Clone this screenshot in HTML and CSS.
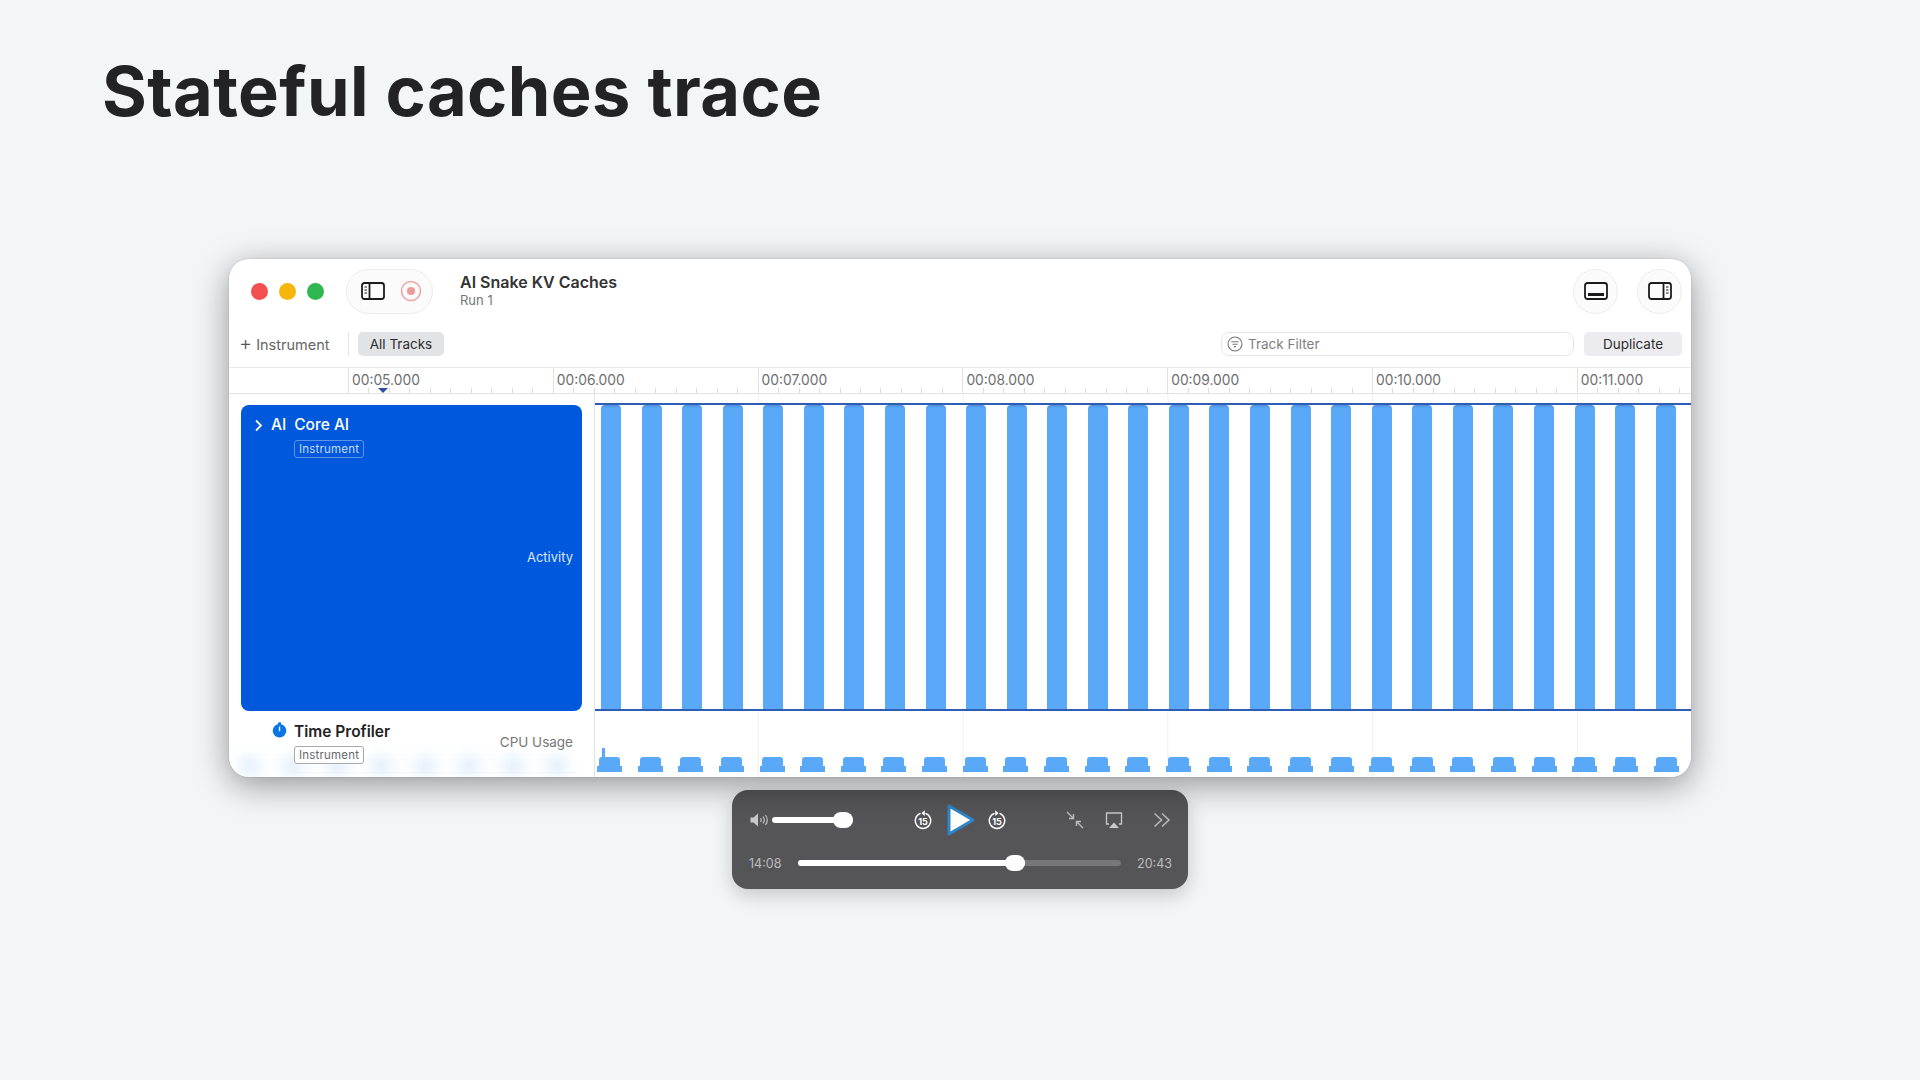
FILE: index.html
```html
<!DOCTYPE html>
<html lang="en">
<head>
<meta charset="UTF-8">
<meta name="viewport" content="width=device-width, initial-scale=1.0">
<link rel="stylesheet" href="styles.css">
<title>Stateful caches trace</title>
</head>
<body>
<h1 class="title">Stateful caches trace</h1>

<div class="window">
  <div class="titlebar">
    <div class="lights">
      <span class="light red"></span>
      <span class="light yellow"></span>
      <span class="light green"></span>
    </div>
    <div class="pill">
      <svg width="24" height="18" viewBox="0 0 24 18" fill="none" stroke="#1b1b1d" stroke-width="1.8">
        <rect x="1" y="1" width="22" height="16" rx="2.5"/>
        <path d="M8.5 1v16"/>
        <path d="M3.5 5h2.5M3.5 8h2.5M3.5 11h2.5" stroke-width="1.2"/>
      </svg>
      <svg width="22" height="22" viewBox="0 0 22 22" fill="none">
        <circle cx="11" cy="11" r="9.5" stroke="#eaa8a8" stroke-width="1.6"/>
        <circle cx="11" cy="11" r="4" fill="#ee9a9a"/>
      </svg>
    </div>
    <div class="doc">
      <div class="doc-name">AI Snake KV Caches</div>
      <div class="doc-run">Run 1</div>
    </div>
    <div class="round-btn first">
      <svg width="24" height="18" viewBox="0 0 24 18" fill="none" stroke="#1b1b1d" stroke-width="1.8">
        <rect x="1" y="1" width="22" height="16" rx="2.5"/>
        <path d="M4 12.5h16" stroke-width="3"/>
      </svg>
    </div>
    <div class="round-btn">
      <svg width="24" height="18" viewBox="0 0 24 18" fill="none" stroke="#1b1b1d" stroke-width="1.8">
        <rect x="1" y="1" width="22" height="16" rx="2.5"/>
        <path d="M15.5 1v16"/>
        <path d="M18 5h2.5M18 8h2.5M18 11h2.5" stroke-width="1.2"/>
      </svg>
    </div>
  </div>

  <div class="toolbar">
    <div class="add"><span class="plus">+</span> Instrument</div>
    <div class="tb-sep"></div>
    <div class="all-tracks">All Tracks</div>
    <div class="filter">
      <svg width="16" height="16" viewBox="0 0 16 16" fill="none" stroke="#777" stroke-width="1.1">
        <circle cx="8" cy="8" r="7"/>
        <path d="M4.2 5.8h7.6M5.5 8.2h5M7 10.6h2"/>
      </svg>
      <span>Track Filter</span>
    </div>
    <div class="duplicate">Duplicate</div>
  </div>

  <div class="ruler">
    <div class="sec">00:05.000</div>
    <div class="sec">00:06.000</div>
    <div class="sec">00:07.000</div>
    <div class="sec">00:08.000</div>
    <div class="sec">00:09.000</div>
    <div class="sec">00:10.000</div>
    <div class="sec">00:11.000</div>
    <span class="playhead"></span>
  </div>

  <div class="body">
    <div class="side">
      <div class="selected">
        <div class="track-head">
          <svg class="chev" width="9" height="13" viewBox="0 0 9 13" fill="none" stroke="#fff" stroke-width="1.8"><path d="M2 1.5l5 5-5 5"/></svg>
          <span class="ai">AI</span>
          <span>Core AI</span>
        </div>
        <span class="badge on-blue">Instrument</span>
        <div class="activity">Activity</div>
      </div>
      <div class="profiler">
        <div class="smudge"></div>
        <div class="prof-main">
          <div class="track-head dark">
            <svg class="stopwatch" width="15" height="16" viewBox="0 0 15 16"><circle cx="7.5" cy="8.7" r="6.8" fill="#0a76e6"/><rect x="6" y="0.4" width="3" height="2" fill="#0a76e6"/><rect x="6.9" y="4.6" width="1.3" height="4.6" fill="#fff"/></svg>
            <span>Time Profiler</span>
          </div>
          <span class="badge">Instrument</span>
        </div>
        <div class="cpu">CPU Usage</div>
      </div>
    </div>

    <div class="tracks">
      <div class="activity-track">
        <i></i><i></i><i></i><i></i><i></i><i></i><i></i><i></i><i></i>
        <i></i><i></i><i></i><i></i><i></i><i></i><i></i><i></i><i></i>
        <i></i><i></i><i></i><i></i><i></i><i></i><i></i><i></i><i></i>
      </div>
      <div class="cpu-track">
        <i class="spike"></i><i></i><i></i><i></i><i></i><i></i><i></i><i></i><i></i>
        <i></i><i></i><i></i><i></i><i></i><i></i><i></i><i></i><i></i>
        <i></i><i></i><i></i><i></i><i></i><i></i><i></i><i></i><i></i>
      </div>
    </div>
  </div>
</div>

<div class="player">
  <div class="player-top">
    <svg class="vol" width="19" height="14" viewBox="0 0 19 14" fill="none">
      <path d="M0.5 4.500h3l4.500-4v13l-4.500-4h-3z" fill="#c9c9c9"/>
      <path d="M10.500 5c.9 1.200.9 2.800 0 4M13 3.500c1.600 2.100 1.600 4.900 0 7M15.500 2c2.200 3 2.200 7 0 10" stroke="#c9c9c9" stroke-width="1.100"/>
    </svg>
    <div class="vol-slider"><span class="knob"></span></div>
    <div class="transport">
      <svg width="18" height="20" viewBox="0 0 18 20" fill="none" stroke="#fff" stroke-width="1.500">
        <path d="M6.500 3.400A7.700 7.700 0 1 0 11.500 3.400"/>
        <path d="M10.800 0.800L7.800 3.200L10.800 5.500" fill="#fff" stroke-width="0.800"/>
        <text x="9" y="14.700" text-anchor="middle" class="skip-num">15</text>
      </svg>
      <svg class="play" width="34" height="36" viewBox="0 0 34 36">
        <path d="M6 4L30 18L6 32Z" fill="#fff" stroke="#2f86c8" stroke-width="3" stroke-linejoin="round"/>
      </svg>
      <svg width="18" height="20" viewBox="0 0 18 20" fill="none" stroke="#fff" stroke-width="1.500">
        <path d="M11.500 3.400A7.700 7.700 0 1 1 6.500 3.400"/>
        <path d="M7.200 0.800L10.200 3.200L7.200 5.500" fill="#fff" stroke-width="0.800"/>
        <text x="9" y="14.700" text-anchor="middle" class="skip-num">15</text>
      </svg>
    </div>
    <div class="extras">
      <svg width="18" height="18" viewBox="0 0 18 18" fill="none" stroke="#bdbdbd" stroke-width="1.400">
        <path d="M1 1l6.500 6.500M7.500 3v4.500H3M17 17l-6.500-6.500M10.500 15v-4.500H15"/>
      </svg>
      <svg width="18" height="17" viewBox="0 0 18 17" fill="none" stroke="#c9c9c9" stroke-width="1.300">
        <path d="M4 12H1.500V1h15v11H14"/>
        <path d="M9 10.500l5 5.500H4z" fill="#c9c9c9" stroke="none"/>
      </svg>
      <svg class="more" width="18" height="16" viewBox="0 0 18 16" fill="none" stroke="#bdbdbd" stroke-width="1.500">
        <path d="M1.500 1.500l7 6.500-7 6.500M9 1.500l7 6.500-7 6.500"/>
      </svg>
    </div>
  </div>
  <div class="player-bottom">
    <span class="time">14:08</span>
    <div class="scrub"><div class="scrub-fill"><span class="knob"></span></div></div>
    <span class="time">20:43</span>
  </div>
</div>
</body>
</html>
```

FILE: styles.css
```css
* {
    box-sizing: border-box;
}

body {
    margin: 0;
    width: 1920px;
    height: 1080px;
    overflow: hidden;
    background-color: #f4f5f7;
    font-family: "Inter", "Liberation Sans", sans-serif;
    color: #1f1f21;
}

.title {
    margin: 0;
    padding: 48px 0 0 102px;
    height: 259px;
    font-size: 68.500px;
    line-height: 88px;
    font-weight: 650;
    letter-spacing: 0.400px;
    color: #232325;
}

.window {
    position: relative;
    z-index: 1;
    width: 1462px;
    height: 518px;
    margin-left: 229px;
    background-color: #fff;
    border-radius: 20px;
    overflow: hidden;
    box-shadow: 0 0 0 1px rgba(0, 0, 0, 0.05), 0 8px 34px rgba(0, 0, 0, 0.4);
}

.titlebar {
    display: flex;
    align-items: center;
    height: 64px;
    padding: 0 9px 0 22px;
}

.lights {
    display: flex;
    gap: 11px;
}

.light {
    width: 17px;
    height: 17px;
    border-radius: 50%;
}

.red { background-color: #f4504f; }
.yellow { background-color: #f6b60c; }
.green { background-color: #2fb84f; }

.pill {
    display: flex;
    align-items: center;
    justify-content: center;
    gap: 15px;
    width: 87px;
    height: 45px;
    margin-left: 22px;
    padding-left: 3px;
    border: 1px solid #ececec;
    border-radius: 23px;
    background-color: #fbfbfb;
}

.doc {
    margin-left: 27px;
    margin-top: -1px;
}

.doc-name {
    font-size: 16px;
    line-height: 19px;
    font-weight: 600;
    color: #333;
}

.doc-run {
    font-size: 13px;
    line-height: 17px;
    color: #777;
}

.round-btn {
    display: flex;
    align-items: center;
    justify-content: center;
    width: 45px;
    height: 45px;
    margin-left: 19px;
    border: 1px solid #ececec;
    border-radius: 50%;
    background-color: #fbfbfb;
}

.round-btn.first {
    margin-left: auto;
}

.toolbar {
    display: flex;
    align-items: center;
    height: 44px;
    padding: 0 9px 2px 10px;
    font-size: 13.500px;
}

.add {
    width: 109px;
    font-size: 14.500px;
    color: #666;
    white-space: nowrap;
}

.plus {
    font-size: 20px;
    line-height: 14px;
    font-weight: 300;
    color: #555;
}

.tb-sep {
    width: 1px;
    height: 24px;
    background-color: #e6e6e6;
}

.all-tracks {
    width: 86px;
    height: 24px;
    margin-left: 9px;
    line-height: 24px;
    text-align: center;
    border-radius: 5px;
    background-color: #e2e3e5;
    color: #2b2b2d;
}

.filter {
    display: flex;
    align-items: center;
    gap: 5px;
    width: 353px;
    height: 24px;
    margin-left: auto;
    padding-left: 5px;
    border: 1px solid #e6e6e6;
    border-radius: 8px;
    color: #808080;
}

.duplicate {
    width: 98px;
    height: 24px;
    margin-left: 10px;
    line-height: 24px;
    text-align: center;
    border-radius: 5px;
    background-color: #ececee;
    color: #2b2b2d;
}

.ruler {
    position: relative;
    display: flex;
    height: 27px;
    padding-left: 119px;
    border-top: 1px solid #e9e9e9;
    border-bottom: 1px solid #e2e2e2;
    background-image: repeating-linear-gradient(to right, #dcdcdc 0 1px, transparent 1px 20.480px);
    background-position: 119px bottom;
    background-size: 100% 5px;
    background-repeat: no-repeat;
    overflow: hidden;
}

.sec {
    flex: 0 0 204.800px;
    padding: 3px 0 0 3px;
    border-left: 1px solid #e2e2e2;
    font-size: 13.800px;
    line-height: 18px;
    color: #6e6e70;
}

.playhead {
    position: absolute;
    left: 149px;
    bottom: 0;
    border-left: 5px solid transparent;
    border-right: 5px solid transparent;
    border-top: 5px solid #2a4ea8;
}

.body {
    display: flex;
    height: 384px;
}

.side {
    flex: 0 0 365px;
    padding: 11px 12px 0 12px;
}

.selected {
    height: 306px;
    padding: 9px 0 0 53px;
    border-radius: 8px;
    background-color: #0058dc;
    color: #fff;
}

.track-head {
    position: relative;
    display: flex;
    gap: 8px;
    margin-left: -23px;
    font-size: 15.500px;
    line-height: 22px;
    font-weight: 500;
}

.chev {
    position: absolute;
    left: -17px;
    top: 5px;
}

.badge {
    display: inline-block;
    height: 18px;
    padding: 0 4px;
    border: 1px solid #a9a9ad;
    border-radius: 3px;
    font-size: 11.500px;
    line-height: 16px;
    letter-spacing: 0.200px;
    color: #6a6a6c;
}

.badge.on-blue {
    margin-top: 4px;
    border-color: #5c93e8;
    color: #c5daf8;
}

.activity {
    margin-top: 90px;
    padding-right: 9px;
    text-align: right;
    font-size: 13px;
    line-height: 18px;
    color: #dbe7fb;
}

.profiler {
    position: relative;
    display: flex;
    justify-content: space-between;
    height: 52px;
    margin: 10px 7px 0 53px;
    border-bottom: 1px solid #e4e6ea;
}

.smudge {
    position: absolute;
    left: -54px;
    right: 0;
    bottom: -4px;
    height: 20px;
    background-image: repeating-linear-gradient(to right, #e6f1fb 0 18px, #fbfdff 18px 44px);
    filter: blur(6px);
}

.prof-main {
    position: relative;
}

.track-head.dark {
    margin-left: 0;
    font-weight: 600;
    color: #222;
}

.stopwatch {
    position: absolute;
    left: -22px;
    top: 1px;
}

.profiler .badge {
    margin-top: 3px;
    background-color: #fff;
}

.cpu {
    position: relative;
    margin-top: 12px;
    padding-right: 2px;
    font-size: 13.500px;
    line-height: 18px;
    color: #777;
}

.tracks {
    flex: 1;
    border-left: 1px solid #e4e4e4;
    padding-top: 9px;
    background-image: linear-gradient(to right, #f0f0f0 0 1px, transparent 1px);
    background-size: 204.800px 100%;
    background-position: 162.800px 0;
}

.activity-track {
    display: flex;
    justify-content: space-between;
    height: 308px;
    padding: 0 15px 0 6px;
    border-top: 2px solid #2f5db5;
    border-bottom: 2px solid #2f5db5;
    background-color: #fff;
}

.activity-track i {
    width: 20px;
    border-radius: 4px 4px 0 0;
    background-image: linear-gradient(#4a8fdc, #5aa8f8 3px);
}

.cpu-track {
    display: flex;
    justify-content: space-between;
    align-items: flex-end;
    height: 61px;
    padding: 0 14px 0 4px;
}

.cpu-track i {
    position: relative;
    width: 21px;
    height: 15px;
    border-radius: 3px 3px 0 0;
    background-color: #5aa8f8;
}

.cpu-track i::after {
    content: "";
    position: absolute;
    left: -2px;
    right: -2px;
    bottom: 0;
    height: 6px;
    background-color: #5aa8f8;
}

.cpu-track .spike::before {
    content: "";
    position: absolute;
    left: 3px;
    bottom: 14px;
    width: 3px;
    height: 10px;
    background-color: #5aa8f8;
}

.player {
    width: 456px;
    height: 99px;
    margin: 13px 0 0 732px;
    padding: 0 16px 0 17px;
    border-radius: 16px;
    background-color: #555557;
    box-shadow: 0 6px 20px rgba(0, 0, 0, 0.2);
}

.player-top {
    display: flex;
    align-items: center;
    height: 60px;
}

.vol {
    margin-left: 1px;
}

.vol-slider {
    position: relative;
    width: 81px;
    height: 6px;
    margin-left: 3px;
    border-radius: 3px;
    background-color: #fff;
}

.knob {
    position: absolute;
    right: 0;
    top: -5px;
    width: 20px;
    height: 16px;
    border-radius: 8px;
    background-color: #fff;
}

.transport {
    display: flex;
    align-items: center;
    gap: 11px;
    margin-left: 61px;
}

.skip-num {
    font-family: "Inter", "Liberation Sans", sans-serif;
    font-size: 9px;
    font-weight: 700;
    fill: #fff;
    stroke: none;
}

.extras {
    display: flex;
    align-items: center;
    gap: 21px;
    margin-left: auto;
    margin-right: 1px;
}

.more {
    margin-left: 9px;
}

.player-bottom {
    display: flex;
    align-items: center;
    justify-content: space-between;
    height: 6px;
    margin-top: 10px;
}

.time {
    font-size: 12.500px;
    color: #bcbcbc;
}

.scrub {
    width: 323px;
    height: 6px;
    border-radius: 3px;
    background-color: #77777a;
}

.scrub-fill {
    position: relative;
    width: 227px;
    height: 6px;
    border-radius: 3px;
    background-color: #fff;
}
```
